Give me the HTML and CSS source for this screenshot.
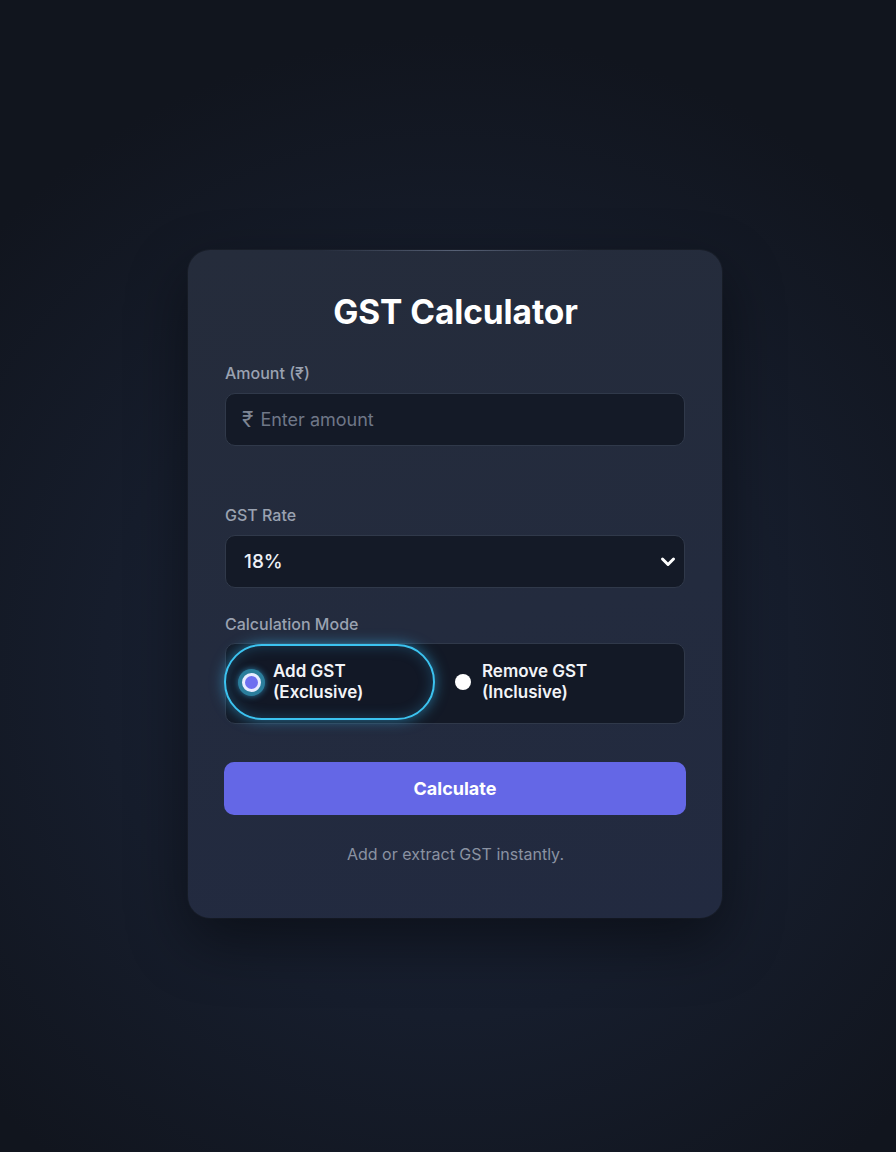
FILE: index.html
```html
<!DOCTYPE html>
<html lang="en">
<head>
<meta charset="utf-8">
<title>GST Calculator</title>
<link rel="stylesheet" href="styles.css">
</head>
<body>
<main class="page">
  <section class="card">
    <h1 class="title">GST Calculator</h1>

    <div class="field field-amount">
      <label class="label">Amount (₹)</label>
      <div class="control">
        <span class="rupee">₹</span>
        <span class="placeholder">Enter amount</span>
      </div>
    </div>

    <div class="field field-rate">
      <label class="label">GST Rate</label>
      <div class="control select">
        <span class="value">18%</span>
        <svg class="chevron" width="18" height="18" viewBox="0 0 18 18"><path d="M3.5 6 L9 11.5 L14.5 6" fill="none" stroke="#ffffff" stroke-width="3" stroke-linecap="round" stroke-linejoin="round"/></svg>
      </div>
    </div>

    <div class="field field-mode">
      <label class="label">Calculation Mode</label>
      <div class="modes">
        <div class="mode mode-active">
          <span class="radio radio-on"><span class="radio-dot"></span></span>
          <span class="mode-text">Add GST<br>(Exclusive)</span>
        </div>
        <div class="mode">
          <span class="radio radio-off"></span>
          <span class="mode-text">Remove GST<br>(Inclusive)</span>
        </div>
      </div>
    </div>

    <button class="btn">Calculate</button>
    <p class="note">Add or extract GST instantly.</p>
  </section>
</main>
</body>
</html>
```

FILE: styles.css
```css
* { box-sizing: border-box; }
html, body { margin: 0; padding: 0; }
body {
  width: 896px;
  height: 1152px;
  overflow: hidden;
  font-family: Inter, "Noto Sans", "DejaVu Sans", sans-serif;
  background: radial-gradient(ellipse 70% 55% at 50% 58%, #1b2439 0%, #161d2c 55%, #11151e 100%);
}
.page {
  padding-top: 250px;
  padding-left: 188px;
}
.card {
  position: relative;
  width: 534px;
  height: 668px;
  border-radius: 22px;
  background: linear-gradient(170deg, #252c3b 0%, #232b3e 55%, #222a40 100%);
  box-shadow: 0 24px 60px rgba(0,0,0,0.45), 0 0 0 1px rgba(255,255,255,0.03);
  padding: 41px 36px 0 37px;
}
.card::before {
  content: "";
  position: absolute;
  top: 0; left: 25%; right: 25%;
  height: 1px;
  background: linear-gradient(90deg, rgba(255,255,255,0), rgba(180,195,225,0.35), rgba(255,255,255,0));
}
.title {
  margin: 0;
  text-align: center;
  font-size: 33.5px;
  line-height: 42px;
  font-weight: 700;
  color: #ffffff;
  letter-spacing: -0.1px;
}
.field { display: flex; flex-direction: column; }
.field-amount { margin-top: 30px; }
.field-rate { margin-top: 59px; }
.field-mode { margin-top: 26px; }
.label {
  font-size: 16px;
  line-height: 20px;
  color: #9aa2b1;
  font-weight: 500;
}
.control {
  margin-top: 10px;
  height: 53px;
  width: 460px;
  border-radius: 10px;
  background: #141a27;
  border: 1px solid #30394a;
  display: flex;
  align-items: center;
  padding: 0 16px;
}
.rupee {
  color: #7d8594;
  font-size: 21px;
  margin-right: 7px;
}
.placeholder {
  color: #6f7787;
  font-size: 18px;
}
.select { justify-content: space-between; padding: 0 7px 0 18px; }
.value { color: #eef1f6; font-size: 19px; font-weight: 500; }
.chevron { display: block; }
.modes {
  margin-top: 9px;
  width: 460px;
  height: 81px;
  border-radius: 10px;
  background: #131926;
  border: 1px solid #30394a;
  display: flex;
  align-items: flex-start;
}
.mode {
  display: flex;
  align-items: center;
  height: 76px;
  color: #f2f4f8;
  font-size: 17px;
  line-height: 21px;
  font-weight: 600;
}
.mode-active {
  margin-left: -2px;
  width: 211px;
  border-radius: 38px;
  border: 2px solid #3cc3f0;
  background: #121826;
  box-shadow: 0 0 14px rgba(56,189,248,0.55), inset 0 0 14px rgba(56,189,248,0.25);
  padding-left: 12px;
}
.mode-active + .mode { padding-left: 20px; }
.radio { flex: none; border-radius: 50%; display: inline-flex; align-items: center; justify-content: center; }
.radio-on {
  width: 27px; height: 27px;
  background: #2b7e9c;
  box-shadow: 0 0 6px rgba(56,189,248,0.6);
}
.radio-dot {
  width: 19px; height: 19px;
  border-radius: 50%;
  background: #6d6ff0;
  border: 3px solid #e8ecff;
}
.radio-off {
  width: 16px; height: 16px;
  background: #ffffff;
}
.mode-text { margin-left: 11px; }
.mode-active .mode-text { margin-left: 8px; }
.btn {
  display: block;
  margin-top: 38px;
  margin-left: -1px;
  width: 462px;
  height: 53px;
  border: none;
  border-radius: 10px;
  background: #6467e6;
  color: #ffffff;
  font-family: inherit;
  font-size: 18px;
  font-weight: 700;
}
.note {
  margin: 29px 0 0;
  text-align: center;
  font-size: 16px;
  line-height: 20px;
  color: #8a92a2;
}
```
